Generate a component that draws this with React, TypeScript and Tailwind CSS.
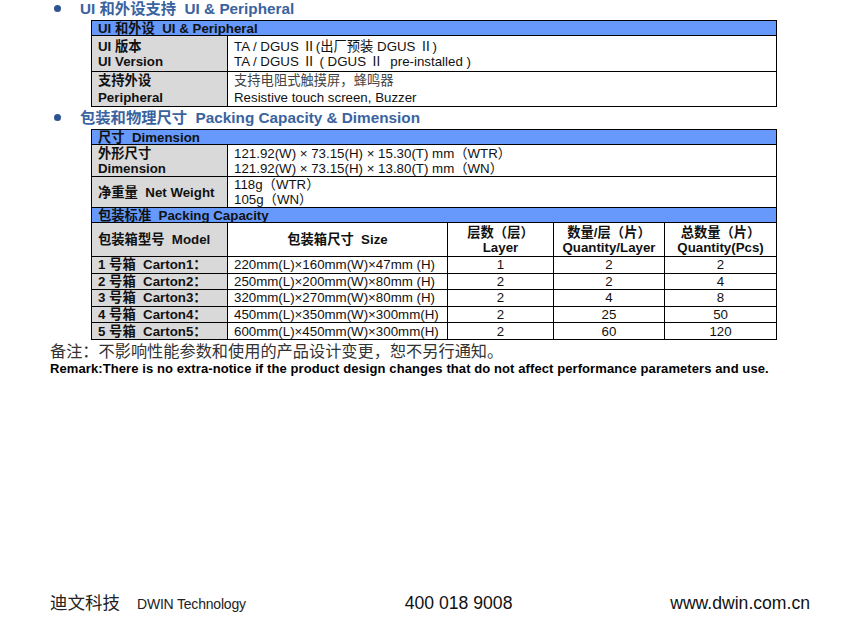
const font = { fontFamily: '"Liberation Sans", Arial, "Noto Sans CJK SC", sans-serif' };

const cartons = [
    { label: "1 号箱  Carton1：", size: "220mm(L)×160mm(W)×47mm (H)", layer: 1, qty: 2, total: 2 },
    { label: "2 号箱  Carton2：", size: "250mm(L)×200mm(W)×80mm (H)", layer: 2, qty: 2, total: 4 },
    { label: "3 号箱  Carton3：", size: "320mm(L)×270mm(W)×80mm (H)", layer: 2, qty: 4, total: 8 },
    { label: "4 号箱  Carton4：", size: "450mm(L)×350mm(W)×300mm(H)", layer: 2, qty: 25, total: 50 },
    { label: "5 号箱  Carton5：", size: "600mm(L)×450mm(W)×300mm(H)", layer: 2, qty: 60, total: 120 },
];

const Heading = ({ children }) => (
    <div className="flex items-center h-[17px]">
        <span className="ml-[54px] w-[7px] h-[7px] rounded-full bg-[#2d5391]" />
        <span className="ml-[19px] text-[15.3px] font-bold text-[#3a63a0] leading-none">{children}</span>
    </div>
);

const Cols = () => (
    <colgroup>
        <col className="w-[136px]" />
        <col className="w-[220px]" />
        <col className="w-[106px]" />
        <col className="w-[111px]" />
        <col className="w-[112px]" />
    </colgroup>
);

const cell = "border border-black px-[6px] align-middle";
const label = `${cell} bg-[#d9d9d9] font-bold`;
const bar = `${cell} bg-[#6699fb] font-bold leading-[13px]`;

export default function App() {
    return (
        <div className="w-[868px] h-[636px] bg-white text-[13.3px] text-[#111] relative" style={font}>
            <Heading>UI 和外设支持&nbsp;&nbsp;UI &amp; Peripheral</Heading>

            <table className="ml-[91px] mt-[3px] w-[685px] table-fixed border-collapse leading-[15px]">
                <Cols />
                <tbody>
                    <tr className="h-[15px]">
                        <td colSpan={5} className={bar}>UI 和外设&nbsp;&nbsp;UI &amp; Peripheral</td>
                    </tr>
                    <tr className="h-[36px]">
                        <td className={label}>UI 版本<br />UI Version</td>
                        <td colSpan={4} className={cell}>TA / DGUS Ⅱ(出厂预装 DGUS Ⅱ)<br />TA / DGUS Ⅱ ( DGUS Ⅱ&nbsp;&nbsp;pre-installed )</td>
                    </tr>
                    <tr className="h-[35px]">
                        <td className={label}>支持外设<br /><span className="inline-block mt-[2px]">Peripheral</span></td>
                        <td colSpan={4} className={cell}><span className="text-[#444]">支持电阻式触摸屏，蜂鸣器</span><br /><span className="inline-block mt-[2px]">Resistive touch screen, Buzzer</span></td>
                    </tr>
                </tbody>
            </table>

            <div className="mt-[2px]">
                <Heading>包装和物理尺寸&nbsp;&nbsp;Packing Capacity &amp; Dimension</Heading>
            </div>

            <table className="ml-[91px] mt-[3px] w-[685px] table-fixed border-collapse leading-[15px]">
                <Cols />
                <tbody>
                    <tr className="h-[15px]">
                        <td colSpan={5} className={bar}>尺寸&nbsp;&nbsp;Dimension</td>
                    </tr>
                    <tr className="h-[32px]">
                        <td className={label}>外形尺寸<br />Dimension</td>
                        <td colSpan={4} className={cell}>121.92(W) × 73.15(H) × 15.30(T) mm（WTR）<br />121.92(W) × 73.15(H) × 13.80(T) mm（WN）</td>
                    </tr>
                    <tr className="h-[30px]">
                        <td className={label}>净重量&nbsp;&nbsp;Net Weight</td>
                        <td colSpan={4} className={cell}>118g（WTR）<br />105g（WN）</td>
                    </tr>
                    <tr className="h-[15px]">
                        <td colSpan={5} className={bar}>包装标准&nbsp;&nbsp;Packing Capacity</td>
                    </tr>
                    <tr className="h-[34px]">
                        <td className={label}>包装箱型号&nbsp;&nbsp;Model</td>
                        <td className={`${cell} font-bold text-center`}>包装箱尺寸&nbsp;&nbsp;Size</td>
                        <td className={`${cell} font-bold text-center`}>层数（层）<br />Layer</td>
                        <td className={`${cell} font-bold text-center`}>数量/层（片）<br />Quantity/Layer</td>
                        <td className={`${cell} font-bold text-center`}>总数量（片）<br />Quantity(Pcs)</td>
                    </tr>
                    {cartons.map((c) => (
                        <tr key={c.label} className="h-[16.6px]">
                            <td className={`${label} whitespace-pre`}>{c.label}</td>
                            <td className={`${cell} whitespace-nowrap`}>{c.size}</td>
                            <td className={`${cell} text-center`}>{c.layer}</td>
                            <td className={`${cell} text-center`}>{c.qty}</td>
                            <td className={`${cell} text-center`}>{c.total}</td>
                        </tr>
                    ))}
                </tbody>
            </table>

            <div className="ml-[50px] mt-[2px] text-[16.2px] leading-[19px] text-[#333]">
                备注：不影响性能参数和使用的产品设计变更，恕不另行通知。
            </div>
            <div className="ml-[50px] text-[13px] tracking-[0.09px] leading-[15px] font-bold text-black">
                Remark:There is no extra-notice if the product design changes that do not affect performance parameters and use.
            </div>

            <div className="absolute left-0 right-0 top-[590px] flex items-baseline">
                <span className="ml-[50px] text-[17.5px] text-[#222]">迪文科技</span>
                <span className="ml-[17px] text-[14px] tracking-[-0.2px] text-[#222]">DWIN Technology</span>
                <span className="ml-[159px] text-[17.6px] text-[#111]">400 018 9008</span>
                <span className="ml-auto mr-[58px] text-[17.6px] text-[#111]">www.dwin.com.cn</span>
            </div>
        </div>
    );
}
